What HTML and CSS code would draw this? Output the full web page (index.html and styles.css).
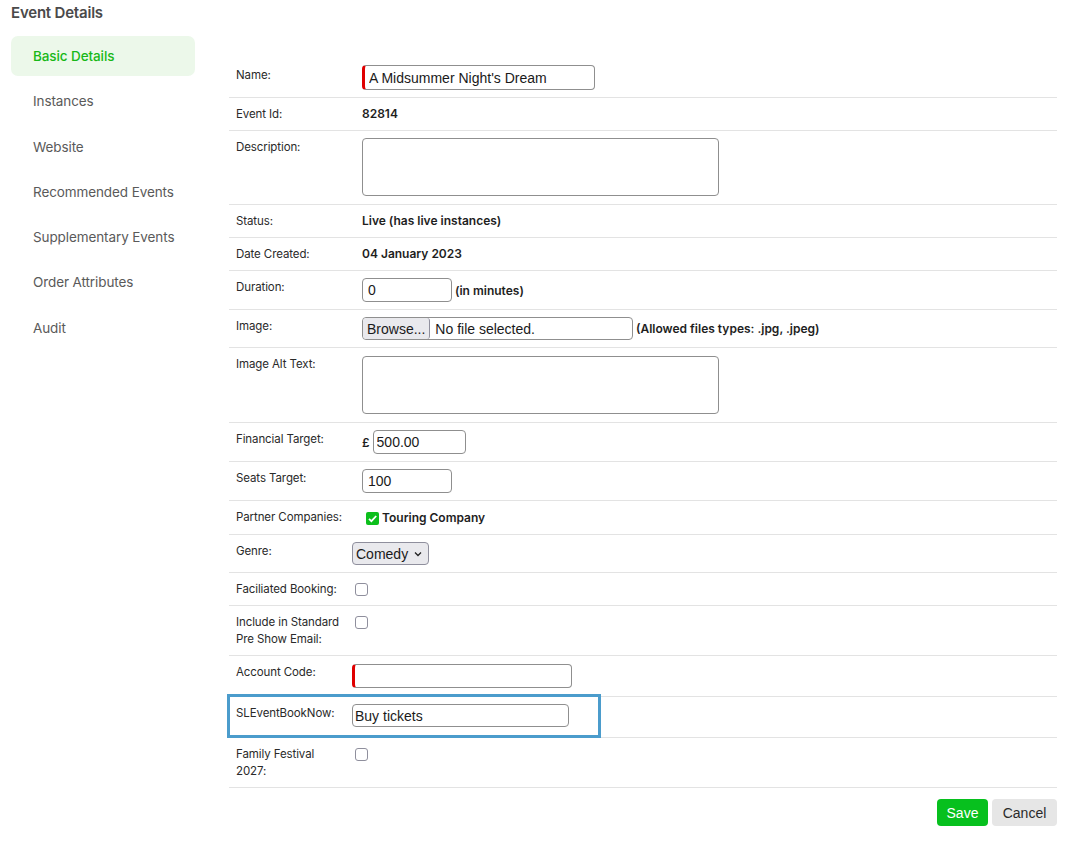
FILE: index.html
```html
<!DOCTYPE html>
<html lang="en">
<head>
    <meta charset="UTF-8">
    <meta name="viewport" content="width=device-width, initial-scale=1.0">
    <title>Event Details</title>
    <link rel="stylesheet" href="styles.css">
</head>
<body>
    <div class="page">
        <h1 class="page-title">Event Details</h1>

        <div class="layout">
            <nav class="sidebar">
                <a class="nav-item active" href="#">Basic Details</a>
                <a class="nav-item" href="#">Instances</a>
                <a class="nav-item" href="#">Website</a>
                <a class="nav-item" href="#">Recommended Events</a>
                <a class="nav-item" href="#">Supplementary Events</a>
                <a class="nav-item" href="#">Order Attributes</a>
                <a class="nav-item" href="#">Audit</a>
            </nav>

            <div class="content">
                <div class="form-table">
                    <div class="row">
                        <div class="label">Name:</div>
                        <div class="value input-cell">
                            <input type="text" class="field field-name required" value="A Midsummer Night's Dream">
                        </div>
                    </div>
                    <div class="row">
                        <div class="label">Event Id:</div>
                        <div class="value text-cell"><strong>82814</strong></div>
                    </div>
                    <div class="row">
                        <div class="label">Description:</div>
                        <div class="value area-cell">
                            <textarea class="field field-area"></textarea>
                        </div>
                    </div>
                    <div class="row">
                        <div class="label">Status:</div>
                        <div class="value text-cell"><strong>Live (has live instances)</strong></div>
                    </div>
                    <div class="row">
                        <div class="label">Date Created:</div>
                        <div class="value text-cell"><strong>04 January 2023</strong></div>
                    </div>
                    <div class="row">
                        <div class="label">Duration:</div>
                        <div class="value input-cell">
                            <input type="text" class="field field-short" value="0">
                            <strong class="hint">(in minutes)</strong>
                        </div>
                    </div>
                    <div class="row">
                        <div class="label">Image:</div>
                        <div class="value input-cell">
                            <div class="file-field">
                                <span class="file-btn">Browse...</span>
                                <span class="file-name">No file selected.</span>
                            </div>
                            <strong class="hint">(Allowed files types: .jpg, .jpeg)</strong>
                        </div>
                    </div>
                    <div class="row">
                        <div class="label">Image Alt Text:</div>
                        <div class="value area-cell spaced">
                            <textarea class="field field-area"></textarea>
                        </div>
                    </div>
                    <div class="row">
                        <div class="label">Financial Target:</div>
                        <div class="value input-cell">
                            <strong class="currency">£</strong>
                            <input type="text" class="field field-money" value="500.00">
                        </div>
                    </div>
                    <div class="row">
                        <div class="label">Seats Target:</div>
                        <div class="value input-cell">
                            <input type="text" class="field field-short" value="100">
                        </div>
                    </div>
                    <div class="row">
                        <div class="label">Partner Companies:</div>
                        <div class="value text-cell spaced">
                            <span class="check checked">
                                <svg width="13" height="13" viewBox="0 0 13 13"><path d="M3 6.8l2.4 2.4L10.2 4" fill="none" stroke="#fff" stroke-width="1.8"/></svg>
                            </span>
                            <strong>Touring Company</strong>
                        </div>
                    </div>

                    <div class="row compact">
                        <div class="label">Genre:</div>
                        <div class="value input-cell">
                            <div class="select">
                                <span>Comedy</span>
                                <svg width="8" height="6" viewBox="0 0 8 6"><path d="M1 1.5l3 3 3-3" fill="none" stroke="#222" stroke-width="1.3"/></svg>
                            </div>
                        </div>
                    </div>
                    <div class="row compact">
                        <div class="label">Faciliated Booking:</div>
                        <div class="value check-cell"><span class="check"></span></div>
                    </div>
                    <div class="row compact">
                        <div class="label">Include in Standard Pre Show Email:</div>
                        <div class="value check-cell"><span class="check"></span></div>
                    </div>
                    <div class="row compact">
                        <div class="label">Account Code:</div>
                        <div class="value input-cell code-cell">
                            <input type="text" class="field field-code required" value="">
                        </div>
                    </div>
                    <div class="row compact">
                        <div class="label">SLEventBookNow:</div>
                        <div class="value input-cell book-cell">
                            <input type="text" class="field field-book" value="Buy tickets">
                        </div>
                        <div class="highlight"></div>
                    </div>
                    <div class="row compact">
                        <div class="label">Family Festival 2027:</div>
                        <div class="value check-cell"><span class="check"></span></div>
                    </div>
                </div>

                <div class="actions">
                    <button class="btn btn-save">Save</button>
                    <button class="btn btn-cancel">Cancel</button>
                </div>
            </div>
        </div>
    </div>
</body>
</html>
```

FILE: styles.css
```css
* {
    margin: 0;
    padding: 0;
    box-sizing: border-box;
}

body {
    font-family: 'Inter', 'Noto Sans', sans-serif;
    color: #222;
    background: #fff;
}

.page {
    padding: 3px 15px 0 11px;
}

.page-title {
    font-size: 15px;
    line-height: 20px;
    font-weight: 600;
    color: #4a4a4a;
    letter-spacing: -0.2px;
}

.layout {
    display: flex;
    margin-top: 13px;
}

/* left navigation */
.sidebar {
    width: 184px;
    flex-shrink: 0;
    margin-right: 34px;
    display: flex;
    flex-direction: column;
    gap: 5.3px;
}

.nav-item {
    display: flex;
    align-items: center;
    height: 40px;
    padding-left: 22px;
    font-size: 13.5px;
    color: #5a5a5a;
    text-decoration: none;
    border-radius: 7px;
    letter-spacing: -0.1px;
}

.nav-item.active {
    background: #ecf8ea;
    color: #18b818;
    font-weight: 500;
}

/* form table */
.content {
    flex: 1;
    padding-top: 22px;
}

.row {
    position: relative;
    display: flex;
    align-items: flex-start;
    border-bottom: 1px solid #e3e3e3;
}

.row:first-child .label {
    padding-top: 9px;
}

.label {
    width: 126px;
    flex-shrink: 0;
    padding: 8px 7px;
    font-size: 11.5px;
    line-height: 16px;
    color: #2a2a2a;
    letter-spacing: -0.1px;
}

.value {
    display: flex;
    align-items: center;
    padding-left: 7px;
    font-size: 12px;
}

.value strong {
    font-weight: 600;
    color: #1e1e1e;
}

.text-cell {
    padding-top: 8px;
    padding-bottom: 8px;
    line-height: 16px;
}

.text-cell.spaced {
    padding-top: 9px;
}

.input-cell {
    padding-top: 7px;
    padding-bottom: 7px;
}

.area-cell {
    padding-top: 7px;
    padding-bottom: 8px;
}

.area-cell.spaced {
    padding-top: 8px;
}

.compact .label {
    width: 123px;
    line-height: 17px;
    padding-bottom: 7px;
}

.compact .value {
    padding-left: 0;
}

.check-cell {
    padding-top: 10px;
    padding-bottom: 7px;
}

.code-cell {
    padding-top: 8px;
    padding-bottom: 8px;
}

.book-cell {
    padding-bottom: 10px;
}

.field {
    font-family: 'Liberation Sans', Arial, sans-serif;
    font-size: 14px;
    color: #1a1a1a;
    border: 1px solid #8f8f8f;
    border-radius: 4px;
    padding: 0 6px;
    height: 23px;
    outline: none;
    background: #fff;
}

.field.required {
    border-left: 3px solid #e00000;
    padding-left: 4px;
}

.field-name { width: 233px; height: 25px; }
.field-short { width: 90px; height: 24px; padding-left: 5px; }
.field-money { width: 93px; height: 24px; padding-left: 3px; }
.field-code { width: 220px; height: 24px; }
.field-book { width: 217px; padding-left: 2px; }

.field-area {
    width: 357px;
    height: 58px;
    resize: none;
}

.hint {
    margin-left: 3px;
}

.currency {
    margin-right: 3px;
}

.file-field {
    display: flex;
    align-items: center;
    width: 271px;
    height: 23px;
    border: 1px solid #8f8f8f;
    border-radius: 4px;
    font-family: 'Liberation Sans', Arial, sans-serif;
    font-size: 14px;
    overflow: hidden;
}

.file-btn {
    height: 100%;
    display: flex;
    align-items: center;
    padding: 0 4px;
    background: #e9e9ed;
    border-right: 1px solid #8f8f9d;
    border-radius: 3px;
    color: #1a1a1a;
}

.file-name {
    margin-left: 5px;
    color: #1a1a1a;
}

.check {
    display: inline-flex;
    width: 13px;
    height: 13px;
    border: 1px solid #8f8f9d;
    border-radius: 3px;
    background: #fff;
    margin-left: 3px;
}

.check.checked {
    border: none;
    background: #0cbf1c;
    border-radius: 2px;
    margin: 0 3px 0 4px;
}

.select {
    display: flex;
    align-items: center;
    gap: 6px;
    height: 23px;
    padding: 0 6px 0 3px;
    border: 1px solid #8f8f9d;
    border-radius: 4px;
    background: #e9e9ed;
    font-family: 'Liberation Sans', Arial, sans-serif;
    font-size: 14px;
    color: #1a1a1a;
}

.highlight {
    position: absolute;
    left: -2px;
    top: -3px;
    width: 374px;
    height: 44px;
    border: 3px solid #4b9ccc;
    pointer-events: none;
}

/* buttons */
.actions {
    display: flex;
    justify-content: flex-end;
    gap: 4px;
    margin-top: 11px;
}

.btn {
    height: 27px;
    border: none;
    border-radius: 4px;
    font-family: 'Liberation Sans', Arial, sans-serif;
    font-size: 14px;
    cursor: pointer;
}

.btn-save {
    width: 51px;
    background: #07c01e;
    color: #fff;
}

.btn-cancel {
    width: 65px;
    background: #e6e6e6;
    color: #2a2a2a;
}
```
